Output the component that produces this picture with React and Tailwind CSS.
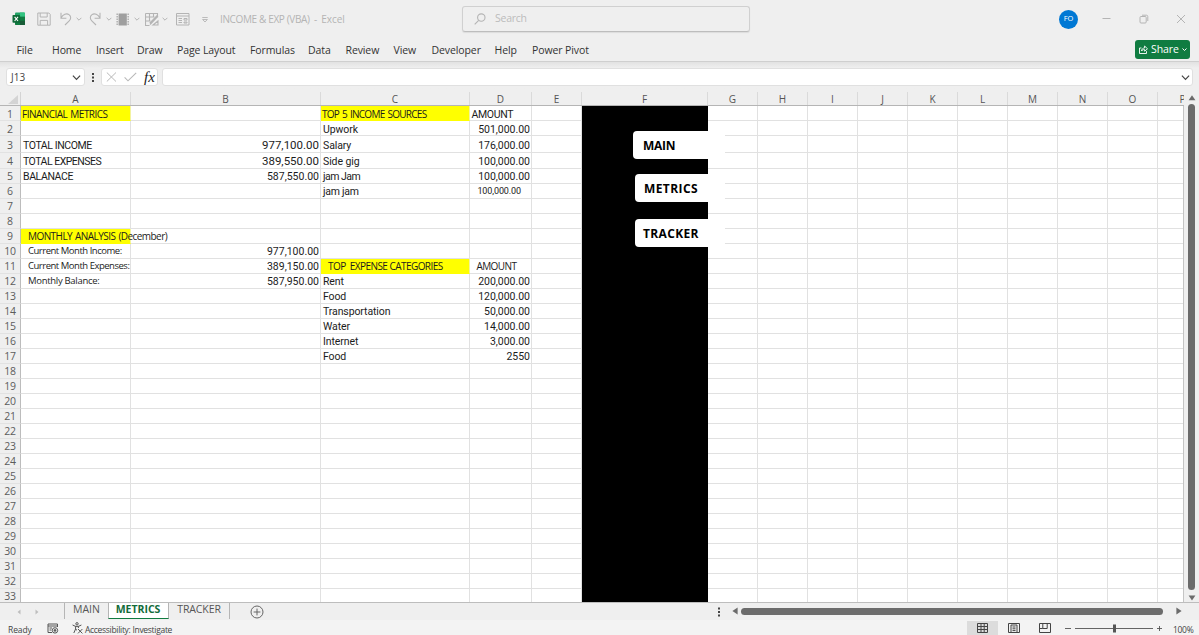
import clsx from "clsx";

const UI = "font-['Open_Sans','Noto_Sans',sans-serif]";
const NUM = "font-['Roboto',sans-serif]";

const MENU = [
  { label: "File", cls: "w-[35.5px]" },
  { label: "Home", cls: "w-[44px]" },
  { label: "Insert", cls: "w-[41px]" },
  { label: "Draw", cls: "w-[40px]" },
  { label: "Page Layout", cls: "w-[73px]" },
  { label: "Formulas", cls: "w-[58px]" },
  { label: "Data", cls: "w-[37.5px]" },
  { label: "Review", cls: "w-[48px]" },
  { label: "View", cls: "w-[38px]" },
  { label: "Developer", cls: "w-[63px]" },
  { label: "Help", cls: "w-[37.5px]" },
  { label: "Power Pivot", cls: "w-[70px]" },
];

const COLS = [
  { id: "A", w: "w-[110px]" },
  { id: "B", w: "w-[190px]" },
  { id: "C", w: "w-[149px]" },
  { id: "D", w: "w-[62px]" },
  { id: "E", w: "w-[50px]" },
  { id: "F", w: "w-[126px]" },
  { id: "G", w: "w-[50px]" },
  { id: "H", w: "w-[50px]" },
  { id: "I", w: "w-[50px]" },
  { id: "J", w: "w-[50px]" },
  { id: "K", w: "w-[50px]" },
  { id: "L", w: "w-[50px]" },
  { id: "M", w: "w-[50px]" },
  { id: "N", w: "w-[50px]" },
  { id: "O", w: "w-[50px]" },
  { id: "P", w: "w-[50px]" },
];

const head = "text-[10px] pl-[1px]";
const label = "text-[10.5px] pl-[2px]";
const seg = "text-[9.5px] tracking-[-0.48px] pl-[7px] pb-[2px]";
const item = "text-[10.5px] tracking-[-0.1px] pl-[2px]";
const amount = "text-[10.5px] tracking-[-0.02px] justify-end pr-[1px]";
const total = "text-[10.5px] justify-end pr-[1px]";
const totalBig = "text-[11.5px] justify-end pr-[1px]";

const CELLS = {
  A1: { t: "FINANCIAL METRICS", c: clsx(head, "tracking-[-0.52px] [word-spacing:1px]"), ui: true, y: true },
  C1: { t: "TOP 5 INCOME SOURCES", c: clsx(head, "tracking-[-0.72px] [word-spacing:1px]"), ui: true, y: true },
  D1: { t: "AMOUNT", c: "text-[10.5px] tracking-[-0.35px] pl-[1.5px]" },
  C2: { t: "Upwork", c: item },
  D2: { t: "501,000.00", c: amount },
  A3: { t: "TOTAL INCOME", c: clsx(label, "tracking-[-0.4px]") },
  B3: { t: "977,100.00", c: totalBig },
  C3: { t: "Salary", c: item },
  D3: { t: "176,000.00", c: amount },
  A4: { t: "TOTAL EXPENSES", c: clsx(label, "tracking-[-0.5px]") },
  B4: { t: "389,550.00", c: totalBig },
  C4: { t: "Side gig", c: item },
  D4: { t: "100,000.00", c: amount },
  A5: { t: "BALANACE", c: clsx(label, "tracking-[-0.4px]") },
  B5: { t: "587,550.00", c: total },
  C5: { t: "jam Jam", c: clsx(item, "tracking-[-0.5px]") },
  D5: { t: "100,000.00", c: amount },
  C6: { t: "jam jam", c: clsx(item, "tracking-[-0.25px]") },
  D6: { t: "100,000.00", c: "text-[9px] tracking-[-0.1px] justify-end pr-[10px]" },
  A9: { t: "MONTHLY ANALYSIS (December)", c: "text-[10px] tracking-[-0.56px] [word-spacing:1px] pl-[7px]", ui: true, y: true },
  A10: { t: "Current Month Income:", c: seg, ui: true },
  B10: { t: "977,100.00", c: total },
  A11: { t: "Current Month Expenses:", c: seg, ui: true },
  B11: { t: "389,150.00", c: total },
  C11: { t: "TOP  EXPENSE CATEGORIES", c: "text-[10px] tracking-[-0.55px] pl-[7px]", ui: true, y: true },
  D11: { t: "AMOUNT", c: "text-[10px] tracking-[-0.6px] pl-[6.5px]", ui: true },
  A12: { t: "Monthly Balance:", c: "text-[9.5px] tracking-[-0.3px] pl-[7px] pb-[2px]", ui: true },
  B12: { t: "587,950.00", c: total },
  C12: { t: "Rent", c: item },
  D12: { t: "200,000.00", c: amount },
  C13: { t: "Food", c: item },
  D13: { t: "120,000.00", c: amount },
  C14: { t: "Transportation", c: item },
  D14: { t: "50,000.00", c: amount },
  C15: { t: "Water", c: item },
  D15: { t: "14,000.00", c: amount },
  C16: { t: "Internet", c: item },
  D16: { t: "3,000.00", c: amount },
  C17: { t: "Food", c: item },
  D17: { t: "2550", c: amount },
};

function rowHeight(n) {
  if (n === 3) return "h-[17px]";
  if (n === 4) return "h-[16px]";
  return "h-[15px]";
}

function cellPad(n) {
  return n > 4 ? "pt-0" : "pt-[2px]";
}

function Chevron({ className, size = 6, sw = 1 }) {
  return (
    <svg className={className} width={size} height={size} viewBox="0 0 6 6" fill="none" stroke="currentColor" strokeWidth={sw}>
      <path d="M0.6 1.8 L3 4.2 L5.4 1.8" />
    </svg>
  );
}

function ExcelLogo() {
  return (
    <svg width="14" height="14" viewBox="0 0 14 14">
      <rect x="3" y="0.5" width="10" height="12.5" rx="1" fill="#21a366" />
      <path d="M3 4.5h10v8.5H4a1 1 0 0 1-1-1z" fill="#107c41" />
      <path d="M8 8.7h5V12a1 1 0 0 1-1 1H8z" fill="#185c37" />
      <path d="M8 0.5h4a1 1 0 0 1 1 1v3H8z" fill="#33c481" />
      <rect x="0.5" y="3" width="7.6" height="7.8" rx="0.8" fill="#0e6b38" />
      <path d="M2.6 4.9 L6 9 M6 4.9 L2.6 9" stroke="#fff" strokeWidth="1.1" />
    </svg>
  );
}

function TitleBar() {
  return (
    <div className="flex h-[38px] items-center pl-[12px] text-[#b4b4b4]">
      <ExcelLogo />
      <svg className="ml-[11px]" width="14" height="14" viewBox="0 0 14 14" fill="none" stroke="currentColor">
        <path d="M0.8 1h11l1.4 1.4v10.8H0.8z M3.2 1v4h7V1 M3.2 13V8.4h7.4V13" />
      </svg>
      <svg className="ml-[8px]" width="14" height="14" viewBox="0 0 14 14" fill="none" stroke="currentColor" strokeWidth="1.1">
        <path d="M2 0.8v5.4h5.4 M2 6 C4 2.6 7.4 0.8 10 2.6 C12.4 4.4 12 7 10.2 8.8 L6 13" />
      </svg>
      <Chevron className="ml-[3px]" />
      <svg className="ml-[6px]" width="14" height="14" viewBox="0 0 14 14" fill="none" stroke="currentColor" strokeWidth="1.1">
        <path d="M12 0.8v5.4H6.6 M12 6 C10 2.6 6.6 0.8 4 2.6 C1.6 4.4 2 7 3.8 8.8 L8 13" />
      </svg>
      <Chevron className="ml-[4px]" />
      <svg className="ml-[4px]" width="14" height="13" viewBox="0 0 14 13">
        <path d="M1.2 0.5v12 M12.2 0.5v12" stroke="currentColor" strokeWidth="1.6" strokeDasharray="1.4 1.1" />
        <rect x="2.6" y="0.5" width="8.2" height="12" fill="#9f9f9f" />
      </svg>
      <Chevron className="ml-[4px]" />
      <svg className="ml-[5px]" width="14" height="13" viewBox="0 0 14 13" fill="none" stroke="currentColor">
        <path d="M0.5 0.5h12v4 M0.5 0.5v12h4 M0.5 4h9 M0.5 8h5 M4.5 0.5v8 M8.5 0.5v4 M13 3 L5 11.5 M8 12h5v-4z" strokeWidth="1.1" />
        <path d="M12.6 2.6 L5 10.4" strokeWidth="2" />
      </svg>
      <Chevron className="ml-[3px]" />
      <svg className="ml-[8px]" width="14" height="13" viewBox="0 0 14 13" fill="none" stroke="currentColor">
        <path d="M0.5 0.5h12.5v11.5H0.5z M0.5 3h12.5 M2.5 5.5h3.5 M2.5 7.5h3.5 M2.5 9.5h3.5 M8 5.5h3v1.6H8z M8 9h3v1H8z" />
      </svg>
      <svg className="ml-[12px]" width="6" height="7" viewBox="0 0 6 7" fill="none" stroke="currentColor" strokeWidth="0.9">
        <path d="M0.3 1.5h5.4 M0.6 3.5h4.8L3 6z" />
      </svg>
      <div className="ml-[12px] w-[242px] whitespace-pre text-[10px] tracking-[-0.36px]">
        {"INCOME & EXP (VBA)  -  "}
        <span className="tracking-[-0.05px]">Excel</span>
      </div>
      <div className="flex h-[26px] w-[288px] items-center rounded-[3px] border border-[#d0d0d0] border-b-[#bdbdbd] pl-[11px] shadow-[0_1px_1px_#dcdcdc]">
        <svg width="12" height="12" viewBox="0 0 12 12" fill="none" stroke="currentColor" strokeWidth="1.1">
          <circle cx="7.3" cy="4.6" r="3.7" />
          <path d="M4.7 7.3 L0.7 11.3" />
        </svg>
        <span className="ml-[9px] text-[10.5px] tracking-[-0.25px] text-[#bcbcbc]">Search</span>
      </div>
      <div className="ml-[309px] flex size-[19px] items-center justify-center rounded-full bg-[#0078d4] text-[7.5px] text-white">FO</div>
      <svg className="ml-[24px]" width="9" height="10" viewBox="0 0 9 10" stroke="currentColor">
        <path d="M0.5 4.5h8" />
      </svg>
      <svg className="ml-[28px]" width="10" height="10" viewBox="0 0 10 10" fill="none" stroke="currentColor">
        <rect x="1" y="2.5" width="6.2" height="6.5" rx="1" />
        <path d="M3 1.2h4.4a1.4 1.4 0 0 1 1.4 1.4V7" />
      </svg>
      <svg className="ml-[27px]" width="10" height="10" viewBox="0 0 10 10" stroke="currentColor">
        <path d="M1 1 L9 9 M9 1 L1 9" />
      </svg>
    </div>
  );
}

function MenuBar() {
  return (
    <div className="flex h-[23px] items-center pl-[16.5px] text-[10.5px] tracking-[-0.1px] text-[#333]">
      {MENU.map((m) => (
        <div key={m.label} className={clsx("pt-[2px] whitespace-nowrap", m.cls)}>
          {m.label}
        </div>
      ))}
      <div className="mr-[9px] ml-auto flex h-[19px] w-[55px] items-center rounded-[3px] bg-[#107c41] pl-[4px] text-white">
        <svg width="9" height="9" viewBox="0 0 9 9" fill="none" stroke="currentColor" strokeWidth="0.9">
          <path d="M2.5 3H0.5v5.5h7V6.2 M2.5 6 C2.6 4 4 3 5.6 3 V1 L8.5 3.8 L5.6 6.2 V4.6 C4.2 4.5 3.2 5 2.5 6z" />
        </svg>
        <span className="ml-[3px] text-[10.5px] font-medium tracking-[-0.1px]">Share</span>
        <Chevron className="ml-auto mr-[3px]" size={5} sw={1.2} />
      </div>
    </div>
  );
}

function FormulaBar() {
  return (
    <div className="flex h-[31px] items-start border-t border-[#cfcfcf] bg-gradient-to-b from-[#e2e2e2] to-[#efefef] to-20% pt-[6px] pl-[6px] text-[#444]">
      <div className="flex h-[18px] w-[79px] items-center rounded-[3px] border border-[#e0e0e0] bg-white pr-[3px] pl-[4px] text-[10px]">
        J13
        <Chevron className="ml-auto" size={9} sw={0.8} />
      </div>
      <svg className="ml-[6px] mt-[4px]" width="4" height="11" viewBox="0 0 4 11" fill="#444">
        <path d="M1 1h2v2H1z M1 4.5h2v2H1z M1 8h2v2H1z" />
      </svg>
      <div className="ml-[6px] flex h-[18px] w-[57px] items-center rounded-[3px] border border-[#e0e0e0] bg-white pl-[4px] text-[#b8b8b8]">
        <svg width="11" height="10" viewBox="0 0 11 10" stroke="currentColor">
          <path d="M0.8 0.5 L10 9.5 M10 0.5 L0.8 9.5" />
        </svg>
        <svg className="ml-[7px]" width="13" height="10" viewBox="0 0 13 10" fill="none" stroke="currentColor" strokeWidth="1.1">
          <path d="M0.6 5.4 L4 8.8 L12.2 0.8" />
        </svg>
        <span className="ml-[7px] font-['Liberation_Serif',serif] text-[15px] leading-none italic text-[#222]">fx</span>
      </div>
      <div className="ml-[4px] flex h-[18px] w-[1031px] items-center justify-end rounded-[3px] border border-[#e0e0e0] bg-white pr-[2px]">
        <Chevron size={9} sw={0.8} />
      </div>
    </div>
  );
}

function ColumnHeads() {
  return (
    <div className="flex h-[14px] w-[1184px] overflow-hidden border-b border-[#b5b5b5] text-[10px] leading-[14px] text-[#555]">
      <div className="flex w-[21px] shrink-0 items-end justify-end border-r border-[#d4d4d4] pr-[2px] pb-[1px]">
        <svg width="10" height="9" viewBox="0 0 10 9" fill="#d4d4d4">
          <path d="M10 0V9H0z" />
        </svg>
      </div>
      {COLS.map((c) => (
        <div key={c.id} className={clsx("shrink-0 border-r border-[#dadada] text-center", c.w)}>
          {c.id}
        </div>
      ))}
    </div>
  );
}

function Row({ n }) {
  return (
    <div className={clsx("flex shrink-0", rowHeight(n))}>
      <div
        className={clsx(
          "flex w-[21px] shrink-0 items-center justify-center border-r border-b border-r-[#bcbcbc] border-b-[#e2e2e2] bg-[#efefef] text-[10.5px] leading-[13px] tracking-[-0.2px] text-[#5c5c5c]",
          cellPad(n)
        )}
      >
        {n}
      </div>
      {COLS.map((c) => {
        const cell = CELLS[c.id + n];
        return (
          <div
            key={c.id}
            className={clsx(
              "flex shrink-0 items-center border-r border-b whitespace-pre",
              c.w,
              cellPad(n),
              c.id === "F" ? "border-black bg-black" : cell?.y ? "border-[#ffff00] border-r-[#f3f3a0] bg-[#ffff00]" : "border-[#e1e1e1]",
              cell && cell.c,
              cell?.ui ? UI : NUM
            )}
          >
            {cell && <span className="relative z-10 leading-[13px]">{cell.t}</span>}
          </div>
        );
      })}
    </div>
  );
}

function NavButton({ children, className }) {
  return (
    <div className={clsx("absolute flex items-center rounded-[4px] bg-white pt-[2px] font-['Open_Sans',sans-serif] font-bold text-black", className)}>
      {children}
    </div>
  );
}

function Sheet() {
  const rows = Array.from({ length: 33 }, (_, i) => i + 1);
  return (
    <div className="flex h-[510px]">
      <div className="w-[1184px]">
        <ColumnHeads />
        <div className="relative flex h-[496px] flex-col overflow-hidden border-r border-[#c4c4c4] bg-white text-[#1c1c1c]">
          {rows.map((n) => (
            <Row key={n} n={n} />
          ))}
          {/* macro buttons floating over column F */}
          <NavButton className="top-[25px] left-[633px] h-[28px] w-[92px] pl-[10px] text-[12px] tracking-[-0.3px]">MAIN</NavButton>
          <NavButton className="top-[68px] left-[635px] h-[28px] w-[90px] pl-[9px] text-[12px] tracking-[0.4px]">METRICS</NavButton>
          <NavButton className="top-[112.5px] left-[635px] h-[28px] w-[90px] pl-[8px] text-[12px] tracking-[0.35px]">TRACKER</NavButton>
        </div>
      </div>
      <div className="flex w-[15px] flex-col items-center pt-[3px] text-[#6b6b6b]">
        <svg width="8" height="6" viewBox="0 0 8 6" fill="currentColor">
          <path d="M4 0.3 L7.4 5.3 H0.6z" />
        </svg>
        <div className="mt-[3px] h-[486px] w-[7px] rounded-full bg-[#6b6b6b]" />
        <svg className="mt-[5px]" width="8" height="6" viewBox="0 0 8 6" fill="currentColor">
          <path d="M4 5.5 L7.4 0.5 H0.6z" />
        </svg>
      </div>
    </div>
  );
}

function TabBar() {
  return (
    <div className="flex h-[18px] items-start border-t border-[#bdbdbd] text-[10.5px] text-[#555]">
      <svg className="mt-[6px] ml-[17px]" width="22" height="6" viewBox="0 0 22 6" fill="#bdbdbd">
        <path d="M3.5 0.4V5.6L0.6 3z M18.5 0.4V5.6L21.4 3z" />
      </svg>
      <div className="ml-[25px] flex h-[16px] w-[44px] items-start justify-center border-l border-[#b5b5b5] leading-[13px]">MAIN</div>
      <div className="h-[16px] w-[61px] border-x border-b-[1.5px] border-[#b5b5b5] border-b-[#107c41] bg-white pr-px text-center leading-[12px] font-bold text-[#146c3b]">METRICS</div>
      <div className="h-[16px] w-[61px] border-r border-[#b5b5b5] text-center leading-[13px] tracking-[-0.1px]">TRACKER</div>
      <svg className="mt-[2px] ml-[20px]" width="14" height="14" viewBox="0 0 14 14" fill="none" stroke="#666">
        <circle cx="7" cy="7" r="6" />
        <path d="M7 3.6v6.8 M3.6 7h6.8" />
      </svg>
      <svg className="mt-[4px] ml-[453px]" width="4" height="10" viewBox="0 0 4 10" fill="#444">
        <path d="M1 0.5h2v2H1z M1 4h2v2H1z M1 7.5h2v2H1z" />
      </svg>
      <svg className="mt-[4px] ml-[11px]" width="6" height="8" viewBox="0 0 6 8" fill="#6b6b6b">
        <path d="M5.6 0.5V7.5L0.4 4z" />
      </svg>
      <div className="mt-[5px] ml-[3px] h-[7px] w-[422px] rounded-full bg-[#6b6b6b]" />
      <svg className="mt-[4px] ml-[13px]" width="6" height="8" viewBox="0 0 6 8" fill="#6b6b6b">
        <path d="M0.4 0.5V7.5L5.6 4z" />
      </svg>
    </div>
  );
}

function StatusBar() {
  return (
    <div className="flex h-[15px] items-center bg-[#f3f3f3] pt-px text-[8.5px] leading-[11px] text-[#444]">
      <div className="ml-[8px] w-[39px] pt-[2px] tracking-[-0.1px]">Ready</div>
      <svg width="12" height="11" viewBox="0 0 12 11" fill="none" stroke="#555">
        <path d="M10.5 4V1H1v8.5h4 M1 3h9.5 M2.5 5h2.5 M2.5 7h2" />
        <circle cx="8" cy="7.4" r="2.7" />
        <circle cx="8" cy="7.4" r="0.9" fill="#555" />
      </svg>
      <svg className="ml-[13px]" width="11" height="12" viewBox="0 0 11 12" fill="none" stroke="#555">
        <circle cx="5" cy="1.8" r="1.2" />
        <path d="M0.6 3 L3.6 4.4V7L1.8 11 M9.4 3 L6.4 4.4V6 M3.4 4.4h3.2 M3.8 7.6 L5 8 M6 7 L10.4 11.4 M10.4 7 L6 11.4" />
      </svg>
      <div className="ml-[2px] w-[882px] pt-[2px] tracking-[-0.3px] whitespace-nowrap">Accessibility: Investigate</div>
      <div className="flex h-[14px] w-[31px] items-center justify-center bg-[#dcdcdc]">
        <svg width="11" height="10" viewBox="0 0 11 10" fill="none" stroke="#444">
          <path d="M0.5 0.5h10v9h-10z M4 0.5v9 M7.2 0.5v9 M0.5 3.5h10 M0.5 6.5h10" />
        </svg>
      </div>
      <svg className="ml-[10px]" width="12" height="10" viewBox="0 0 12 10" fill="none" stroke="#444">
        <path d="M0.5 0.5h11v9h-11z M3 2h6v7.5H3z M4.5 4h3 M4.5 5.8h3 M4.5 7.6h3" />
      </svg>
      <svg className="ml-[19px]" width="12" height="10" viewBox="0 0 12 10" fill="none" stroke="#444">
        <path d="M0.5 0.5h11v9h-11z M3.8 0.5v5h4.4v-5 M3.8 5.5H0.5" />
      </svg>
      <svg className="ml-[14px]" width="98" height="11" viewBox="0 0 98 11" fill="none" stroke="#555">
        <path d="M0 5.5h6 M10 5.5h78 M92 5.5h5 M94.5 3v5" strokeWidth="0.9" />
        <rect x="48" y="1.5" width="3" height="8" fill="#555" stroke="none" />
      </svg>
      <div className="ml-[10px] pt-[2px] tracking-[-0.3px]">100%</div>
    </div>
  );
}

export default function App() {
  return (
    <div className={clsx("flex h-[635px] w-[1199px] flex-col overflow-hidden bg-[#efefef]", UI)}>
      <TitleBar />
      <MenuBar />
      <FormulaBar />
      <Sheet />
      <TabBar />
      <StatusBar />
    </div>
  );
}
